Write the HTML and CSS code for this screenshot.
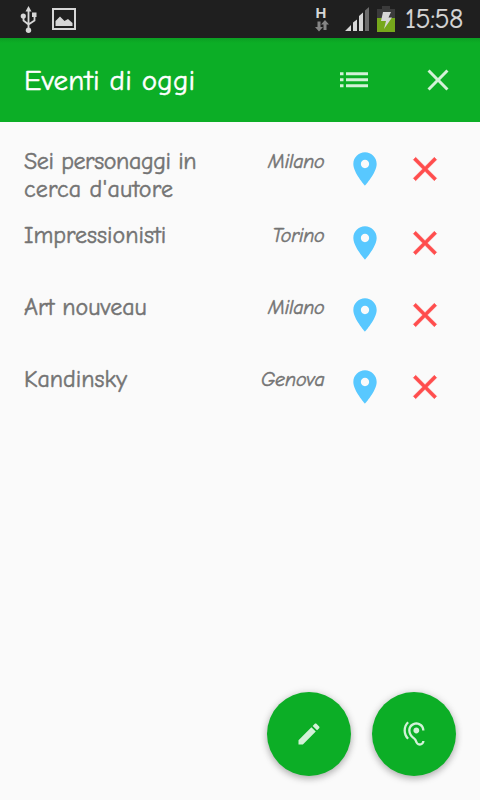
FILE: index.html
```html
<!DOCTYPE html>
<html lang="it">
<head>
    <meta charset="UTF-8">
    <title>Eventi di oggi</title>
    <link rel="stylesheet" href="styles.css">
</head>
<body>
    <svg class="defs" width="0" height="0">
        <symbol id="pin" viewBox="0 0 24 24"><path d="M12 2C8.13 2 5 5.13 5 9c0 5.25 7 13 7 13s7-7.75 7-13c0-3.87-3.13-7-7-7zm0 9.5c-1.38 0-2.5-1.12-2.5-2.5s1.12-2.5 2.5-2.5 2.5 1.12 2.5 2.5-1.12 2.5-2.5 2.5z"/></symbol>
        <symbol id="clear" viewBox="0 0 24 24"><path d="M19 6.41L17.59 5 12 10.59 6.41 5 5 6.41 10.59 12 5 17.59 6.41 19 12 13.41 17.59 19 19 17.59 13.41 12z"/></symbol>
    </svg>

    <div class="status">
        <svg class="usb" width="18" height="28" viewBox="0 0 18 28">
            <path d="M8.5 5v18M3.5 10v4.5l5 4M14.5 9v5.5l-6 4" fill="none" stroke="#d6d6d6" stroke-width="1.8"/>
            <path d="M8.5 0l3 5.5h-6zM12 6.5h4.5V11H12z"/>
            <circle cx="3.3" cy="10" r="2.6"/>
            <circle cx="8.5" cy="24.3" r="2.7"/>
        </svg>
        <svg class="photo" width="24" height="22" viewBox="0 0 24 22">
            <path d="M1 1h22v20H1z" fill="none" stroke="#d6d6d6" stroke-width="2"/>
            <path d="M3.5 18v-5L8 8.5l4.5 4.5 3.5-2 4.500 4v3z"/>
        </svg>
        <div class="network">
            <b>H</b>
            <svg width="14" height="12" viewBox="0 0 14 12"><path d="M2.5 1.5h3V7H8l-4 4.500L0 7h2.500zM8.500 10h3V4.500H14L10 0 6 4.500h2.500z" fill="#858585"/></svg>
        </div>
        <svg class="signal" width="24" height="24" viewBox="0 0 24 24">
            <path d="M0 24l6-6v6zM8 15.500l4-3V24H8zM14 9l4-3.500V24h-4z"/>
            <path d="M20 3.500L24 0v24h-4z" fill="#6c6c6c"/>
        </svg>
        <svg class="battery" width="18" height="26" viewBox="0 0 18 26">
            <path d="M5 0h8v3h5v9H0V3h5z" fill="#3b3b3b"/>
            <path d="M0 12h18v14H0z" fill="#76a81b"/>
            <path d="M6 6h8l-2.500 5.500H15L7 23l2-8H4z"/>
        </svg>
        <span class="clock">15:58</span>
    </div>

    <div class="toolbar">
        <h1>Eventi di oggi</h1>
        <svg class="list-icon" width="28" height="16" viewBox="0 0 28 16">
            <path d="M0 .3h3.500v3H0zM6 .3h22v3H6zM0 6.300h3.500v3H0zM6 6.300h22v3H6zM0 12.300h3.500v3H0zM6 12.300h22v3H6z"/>
        </svg>
        <svg class="close-icon" width="36" height="36"><use href="#clear"/></svg>
    </div>

    <div class="events">
        <div class="event">
            <span class="title"><span class="tight">Sei personaggi in</span><br><span class="wide">cerca d'autore</span></span>
            <span class="city">Milano</span>
            <svg class="pin"><use href="#pin"/></svg>
            <svg class="delete"><use href="#clear"/></svg>
        </div>
        <div class="event">
            <span class="title">Impressionisti</span>
            <span class="city">Torino</span>
            <svg class="pin"><use href="#pin"/></svg>
            <svg class="delete"><use href="#clear"/></svg>
        </div>
        <div class="event">
            <span class="title">Art nouveau</span>
            <span class="city">Milano</span>
            <svg class="pin"><use href="#pin"/></svg>
            <svg class="delete"><use href="#clear"/></svg>
        </div>
        <div class="event">
            <span class="title">Kandinsky</span>
            <span class="city">Genova</span>
            <svg class="pin"><use href="#pin"/></svg>
            <svg class="delete"><use href="#clear"/></svg>
        </div>
    </div>

    <div class="actions">
        <div class="fab">
            <svg width="28" height="28" viewBox="0 0 24 24"><path d="M3 17.250V21h3.750L17.810 9.940l-3.750-3.750L3 17.250zM20.710 7.040c.39-.39.39-1.020 0-1.410l-2.340-2.340c-.39-.39-1.020-.39-1.410 0l-1.830 1.830 3.750 3.750 1.830-1.830z"/></svg>
        </div>
        <div class="fab">
            <svg width="28" height="28" viewBox="0 0 24 24"><path d="M17 20c-.29 0-.56-.06-.76-.15-.71-.37-1.210-.88-1.710-2.380-.51-1.560-1.470-2.290-2.390-3-.79-.61-1.610-1.240-2.320-2.530C9.290 10.980 9 9.930 9 9c0-2.800 2.200-5 5-5s5 2.200 5 5h2c0-3.930-3.070-7-7-7S7 5.070 7 9c0 1.260.38 2.650 1.070 3.900.91 1.650 1.980 2.480 2.850 3.150.81.62 1.390 1.070 1.710 2.050.6 1.820 1.370 2.840 2.730 3.550.51.23 1.070.35 1.640.35 2.210 0 4-1.790 4-4h-2c0 1.100-.9 2-2 2zM7.640 2.640L6.220 1.220C4.230 3.210 3 5.960 3 9s1.230 5.790 3.220 7.780l1.410-1.410C6.010 13.740 5 11.490 5 9s1.010-4.740 2.640-6.360zM11.500 9c0 1.380 1.120 2.500 2.500 2.500s2.500-1.120 2.500-2.500-1.120-2.500-2.500-2.500-2.500 1.120-2.500 2.500z"/></svg>
        </div>
    </div>
</body>
</html>
```
FILE: styles.css
```css
* {
    box-sizing: border-box;
}
body {
    display: flex;
    flex-direction: column;
    height: 100vh;
    margin: 0;
    background: #fafafa;
    color: #737373;
    font-family: "Choco cooky", "Comic Neue", Lato, sans-serif;
    -webkit-text-stroke: 0.5px;
    overflow: hidden;
}
.defs {
    position: absolute;
}
svg {
    display: block;
    flex: none;
}
.status {
    display: flex;
    align-items: flex-start;
    flex: none;
    height: 38px;
    padding: 0 16px 0 20px;
    background: #1f1f1f;
    color: #d6d6d6;
    fill: #d6d6d6;
}
.usb {
    margin-top: 6px;
}
.photo {
    margin: 8px 0 0 14px;
}
.network {
    display: flex;
    flex-direction: column;
    align-items: center;
    margin: 5px 16px 0 auto;
}
.network b {
    margin-right: 2px;
    font: bold 15px/15px "Liberation Sans", sans-serif;
    -webkit-text-stroke: 0;
}
.signal {
    margin-top: 7px;
}
.battery {
    margin: 6px 10px 0 8px;
}
.clock {
    width: 59px;
    font-size: 28px;
    line-height: 38px;
    letter-spacing: -0.6px;
    white-space: nowrap;
    -webkit-text-stroke: 0.2px;
}
.toolbar {
    display: flex;
    align-items: center;
    flex: none;
    height: 84px;
    padding: 0 24px;
    background: linear-gradient(#0b9f23, #0cae26 5px);
    color: #fff;
    fill: #d3f1d8;
}
h1 {
    flex: 1;
    margin: 0;
    font-size: 29px;
    font-weight: normal;
    line-height: 36px;
    letter-spacing: 0.2px;
    padding-top: 2px;
}
.list-icon {
    margin-right: 52px;
}
.events {
    flex: 1;
    padding: 24px 35px 0 24px;
}
.event {
    display: flex;
    align-items: flex-start;
    min-height: 72px;
    padding: 1px 0 17px;
}
.title {
    flex: 1;
    font-size: 24px;
    line-height: 28px;
    white-space: nowrap;
}
.tight {
    letter-spacing: -0.4px;
}
.wide {
    letter-spacing: 0.2px;
}
.city {
    margin-right: 20.5px;
    font-size: 20px;
    font-style: italic;
    line-height: 30px;
    letter-spacing: -0.2px;
}
.pin, .delete {
    width: 40px;
    height: 40px;
    margin-top: 2px;
}
.pin {
    fill: #58c8ff;
}
.delete {
    margin-left: 20px;
    fill: #ff4d4d;
    stroke: #ff4d4d;
    stroke-width: 0.3px;
}
.actions {
    display: flex;
    justify-content: flex-end;
    gap: 21px;
    padding: 0 24px 24px;
}
.fab {
    display: flex;
    align-items: center;
    justify-content: center;
    width: 84px;
    height: 84px;
    border-radius: 50%;
    background: #0cae26;
    fill: #d3f1d8;
    box-shadow: 0 3px 7px rgba(0, 0, 0, 0.25), 0 0 8px rgba(0, 0, 0, 0.1);
}
```
